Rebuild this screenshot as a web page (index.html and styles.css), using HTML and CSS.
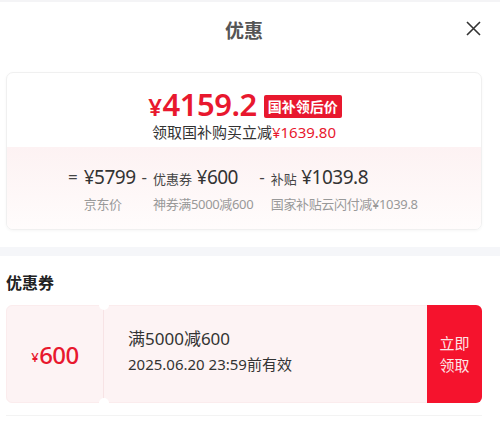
FILE: index.html
```html
<!DOCTYPE html>
<html lang="zh-CN">
<head>
<meta charset="UTF-8">
<meta name="viewport" content="width=device-width, initial-scale=1.0">
<title>优惠</title>
<link rel="stylesheet" href="styles.css">
</head>
<body>
  <div class="sheet">
    <div class="header">
      <h2 class="title">优惠</h2>
      <span class="close">
        <svg width="15" height="15" viewBox="0 0 15 15"><path d="M1 1 L14 14 M14 1 L1 14" stroke="#333" stroke-width="1.6" fill="none"/></svg>
      </span>
    </div>

    <div class="card">
      <div class="card-top">
        <div class="price-line">
          <span class="price"><span class="yen">¥</span>4159.2</span>
          <span class="badge">国补领后价</span>
        </div>
        <div class="saving">领取国补购买立减<span class="red">¥1639.80</span></div>
      </div>
      <div class="card-bottom">
        <div class="calc">
          <span class="op">=</span>
          <span class="val">¥5799</span>
          <span class="op">-</span>
          <span class="val"><small>优惠券</small> ¥600</span>
          <span class="op">-</span>
          <span class="val"><small>补贴</small> ¥1039.8</span>
          <span></span>
          <span class="label">京东价</span>
          <span></span>
          <span class="label">神券满5000减600</span>
          <span></span>
          <span class="label">国家补贴云闪付减¥1039.8</span>
        </div>
      </div>
    </div>
  </div>

  <div class="divider"></div>

  <div class="sheet">
    <h3 class="section-title">优惠券</h3>
    <div class="coupon">
      <div class="coupon-amount"><span class="yen-s">¥</span>600</div>
      <div class="coupon-info">
        <div class="coupon-rule">满5000减600</div>
        <div class="coupon-date">2025.06.20 23:59前有效</div>
      </div>
      <button class="coupon-btn">立即<br>领取</button>
    </div>
    <div class="line"></div>
  </div>
</body>
</html>
```

FILE: styles.css
```css
body {
  margin: 0;
  background-color: #fff;
  font-family: "Noto Sans", "Noto Sans CJK SC", sans-serif;
  color: #333;
  border-top: 2px solid #f4f4f6;
}
.sheet {
  padding: 0 18px 0 6px;
}
.header {
  height: 70px;
  display: flex;
  align-items: center;
  justify-content: center;
  position: relative;
}
.title {
  margin: 0 0 14px 0;
  font-size: 19px;
  font-weight: 700;
  color: #555;
}
.close {
  position: absolute;
  right: 1px;
  top: 19px;
  line-height: 0;
}
.card {
  border: 1px solid #f0f0f0;
  border-radius: 7px;
  overflow: hidden;
  box-shadow: 0 1px 3px rgba(0, 0, 0, 0.04);
}
.card-top {
  height: 74px;
  display: flex;
  flex-direction: column;
  align-items: center;
}
.price-line {
  display: flex;
  align-items: center;
  height: 34px;
  margin-top: 15px;
  margin-left: 2px;
}
.price {
  color: #e8182e;
  font-size: 31px;
  line-height: 34px;
  font-weight: 600;
  letter-spacing: -0.5px;
}
.yen {
  font-size: 24px;
  margin-right: 1px;
}
.badge {
  background-color: #e8182e;
  color: #fff;
  font-size: 14px;
  font-weight: 700;
  padding: 0 4px;
  height: 23px;
  line-height: 23px;
  border-radius: 2px;
  margin-left: 7px;
  margin-top: 2px;
}
.saving {
  font-size: 15px;
  line-height: 20px;
  color: #333;
  margin-top: 0;
}
.red {
  color: #e8182e;
}
.card-bottom {
  height: 82px;
  background: linear-gradient(180deg, #fdf2f3 0%, #fef8f8 60%, #fffcfc 100%);
}
.calc {
  display: grid;
  grid-template-columns: auto auto auto auto auto auto;
  justify-content: start;
  column-gap: 6px;
  padding: 17px 0 0 61px;
}
.op {
  font-size: 17px;
  color: #444;
  line-height: 26px;
}
.val {
  font-size: 19px;
  color: #333;
  line-height: 26px;
  letter-spacing: -0.5px;
}
.val small {
  font-size: 13px;
  color: #444;
  letter-spacing: 0;
}
.label {
  font-size: 13px;
  color: #999;
  line-height: 20px;
  margin-top: 2px;
  letter-spacing: -0.35px;
}
.divider {
  height: 9px;
  background-color: #f5f6f9;
  margin-top: 17px;
}
.section-title {
  margin: 0;
  padding: 14px 0 11px 0;
  font-size: 16px;
  font-weight: 700;
  color: #222;
}
.coupon {
  display: flex;
  height: 96px;
  background-color: #fdf3f4;
  border-radius: 6px;
  position: relative;
  border: 1px solid #fbeced;
}
.coupon::before,
.coupon::after {
  content: "";
  position: absolute;
  left: 92px;
  width: 10px;
  height: 10px;
  border-radius: 50%;
  background-color: #fff;
}
.coupon::before {
  top: -6px;
}
.coupon::after {
  bottom: -6px;
}
.coupon-amount {
  width: 96px;
  display: flex;
  align-items: center;
  justify-content: center;
  color: #e8182e;
  font-size: 24px;
  font-weight: 500;
  letter-spacing: -0.5px;
  border-right: 1px solid #f7e3e5;
}
.yen-s {
  font-size: 13px;
  margin-top: 5px;
  margin-right: 1px;
}
.coupon-info {
  flex: 1;
  padding: 20px 0 0 24px;
}
.coupon-rule {
  font-size: 17px;
  color: #333;
  line-height: 26px;
}
.coupon-date {
  font-size: 15px;
  color: #333;
  line-height: 24px;
}
.coupon-btn {
  width: 55px;
  border: none;
  background-color: #f5132d;
  color: #fde5e7;
  font-size: 15px;
  line-height: 22px;
  font-family: "Noto Sans CJK SC", sans-serif;
  border-radius: 0 6px 6px 0;
  margin: -1px -1px -1px 0;
  padding: 0;
}
.line {
  height: 1px;
  background-color: #f3f3f3;
  margin-top: 12px;
}
```
